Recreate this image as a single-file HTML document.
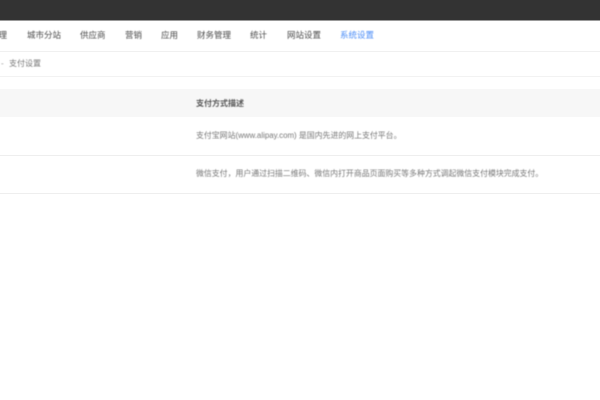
<!DOCTYPE html>
<html lang="zh">
<head>
<meta charset="utf-8">
<style>
html,body{margin:0;padding:0;width:600px;height:400px;overflow:hidden;background:#fff;font-family:"Liberation Sans","Noto Sans CJK SC",sans-serif}
.a{position:absolute;white-space:nowrap;font-size:8px;line-height:12px;color:#666;filter:blur(.4px)}
.n{font-size:8.5px;color:#4a4a4a;top:29px}
.b{position:absolute;left:0;width:600px}
</style>
</head>
<body>
<div class="b" style="top:0;height:20px;background:#333"></div>
<div class="b" style="top:20px;height:1px;background:#999"></div>
<div class="b" style="top:51px;height:1px;background:#f0f0f0"></div>
<div class="b" style="top:76px;height:1px;background:#f2f2f2"></div>
<div class="b" style="top:89px;height:28px;background:#f7f7f7"></div>
<div class="b" style="top:155px;height:1px;background:#eee"></div>
<div class="b" style="top:193px;height:1px;background:#eee"></div>

<div class="a n" style="left:-1.5px">理</div>
<div class="a n" style="left:27px">城市分站</div>
<div class="a n" style="left:80px">供应商</div>
<div class="a n" style="left:125px">营销</div>
<div class="a n" style="left:161px">应用</div>
<div class="a n" style="left:197px">财务管理</div>
<div class="a n" style="left:250px">统计</div>
<div class="a n" style="left:287px">网站设置</div>
<div class="a n" style="left:340px;color:#4a8cf7">系统设置</div>

<div class="a" style="left:1px;top:58px;color:#999">-</div>
<div class="a" style="left:9px;top:58px;color:#777">支付设置</div>

<div class="a" style="left:196px;top:98px;color:#555;font-weight:bold">支付方式描述</div>
<div class="a" style="left:196px;top:130px;color:#777;font-size:7.9px">支付宝网站(www.alipay.com) 是国内先进的网上支付平台。</div>
<div class="a" style="left:196px;top:168px;color:#777;font-size:7.9px">微信支付，用户通过扫描二维码、微信内打开商品页面购买等多种方式调起微信支付模块完成支付。</div>
</body>
</html>
